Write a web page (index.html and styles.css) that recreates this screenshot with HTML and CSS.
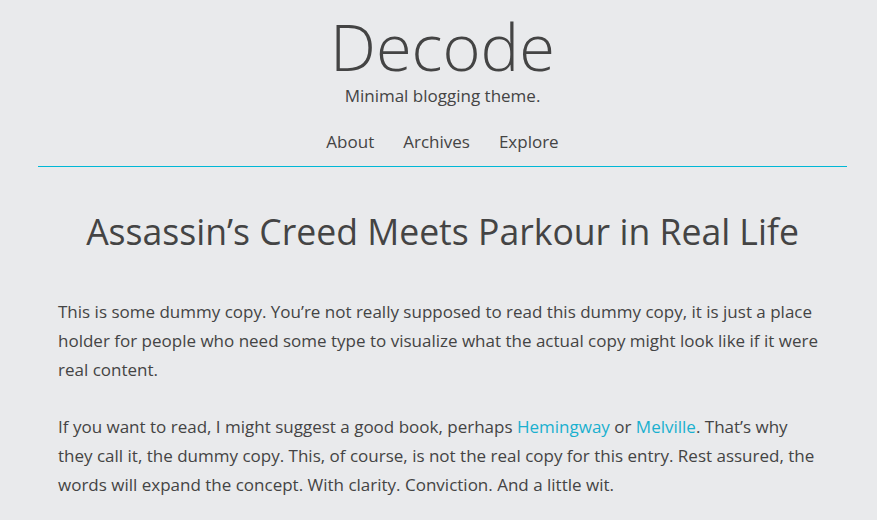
FILE: index.html
```html
<!DOCTYPE html>
<html lang="en">
<head>
<meta charset="utf-8">
<title>Decode</title>
<link rel="stylesheet" href="styles.css">
</head>
<body>
<div class="page">
  <header class="site-header">
    <h1 class="site-title">Decode</h1>
    <p class="site-tagline">Minimal blogging theme.</p>
    <nav class="site-nav">
      <a href="#">About</a>
      <a href="#">Archives</a>
      <a href="#">Explore</a>
    </nav>
  </header>
  <div class="rule"></div>
  <article class="post">
    <h2 class="post-title">Assassin’s Creed Meets Parkour in Real Life</h2>
    <p>This is some dummy copy. You’re not really supposed to read this dummy copy, it is just a place holder for people who need some type to visualize what the actual copy might look like if it were real content.</p>
    <p>If you want to read, I might suggest a good book, perhaps <a href="#">Hemingway</a> or <a href="#">Melville</a>. That’s why they call it, the dummy copy. This, of course, is not the real copy for this entry. Rest assured, the words will expand the concept. With clarity. Conviction. And a little wit.</p>
  </article>
</div>
</body>
</html>
```
FILE: styles.css
```css
html, body {
  margin: 0;
  padding: 0;
  background: #e9eaec;
}
body {
  color: #444;
  font-family: "Open Sans", "Noto Sans", sans-serif;
}
.page {
  width: 809px;
  margin-left: 38px;
}
.site-header {
  text-align: center;
  padding-bottom: 12px;
}
.rule {
  height: 1px;
  background: #00b8d6;
}
.site-title {
  margin: 0;
  padding-top: 8px;
  font-size: 65px;
  font-weight: 300;
  line-height: 76px;
  color: #444;
}
.site-tagline {
  margin: 0;
  font-size: 17px;
  line-height: 24px;
}
.site-nav {
  display: flex;
  justify-content: center;
  gap: 29px;
  margin-top: 22px;
}
.site-nav a {
  color: #444;
  text-decoration: none;
  font-size: 17px;
  line-height: 24px;
}
.post {
  padding: 0 20px;
}
.post-title {
  margin: 42px 0 0;
  text-align: center;
  font-size: 35.6px;
  font-weight: 400;
  line-height: 44px;
}
.post p {
  margin: 28px 0 0;
  max-width: 764px;
  font-size: 17px;
  line-height: 29px;
}
.post p:first-of-type {
  margin-top: 44px;
}
.post a {
  color: #1ab0cf;
  text-decoration: none;
}
```
